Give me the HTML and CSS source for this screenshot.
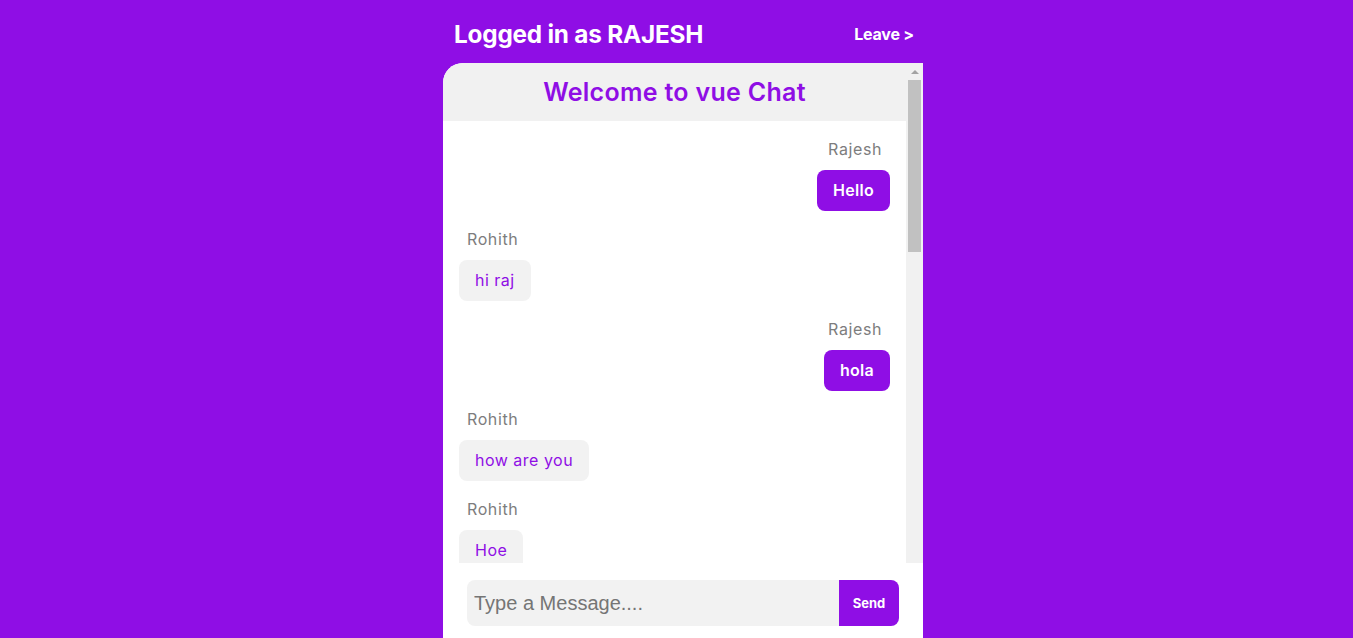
FILE: index.html
```html
<!DOCTYPE html>
<html lang="en">
<head>
<meta charset="utf-8">
<title>vue Chat</title>
<link rel="stylesheet" href="styles.css">
</head>
<body>
<div class="page">
  <div class="app">
    <header class="topbar">
      <h1 class="logged">Logged in as RAJESH</h1>
      <button class="leave">Leave &gt;</button>
    </header>
    <section class="chat">
      <div class="chat-body">
        <div class="chat-scroll">
          <h2 class="chat-title">Welcome to vue Chat</h2>
          <div class="messages">
            <div class="msg me"><div class="name">Rajesh</div><div class="bubble">Hello</div></div>
            <div class="msg"><div class="name">Rohith</div><div class="bubble">hi raj</div></div>
            <div class="msg me"><div class="name">Rajesh</div><div class="bubble">hola</div></div>
            <div class="msg"><div class="name">Rohith</div><div class="bubble">how are you</div></div>
            <div class="msg"><div class="name">Rohith</div><div class="bubble">Hoe</div></div>
            <div class="msg me"><div class="name">Rajesh</div><div class="bubble">I am fine</div></div>
            <div class="msg"><div class="name">Rohith</div><div class="bubble">good</div></div>
          </div>
        </div>
        <div class="scrollbar" aria-hidden="true">
          <div class="sb-up"><span class="sb-arrow"></span></div>
          <div class="sb-thumb"></div>
        </div>
      </div>
      <form class="composer">
        <input class="composer-input" type="text" placeholder="Type a Message....">
        <button class="send" type="button">Send</button>
      </form>
    </section>
  </div>
</div>
</body>
</html>
```

FILE: styles.css
```css
html, body {
  margin: 0;
  padding: 0;
}
body {
  background: #8f0ee5;
  font-family: "Inter", "Open Sans", sans-serif;
  height: 638px;
  overflow: hidden;
}
.page {
  padding-left: 13px;
}
.app {
  width: 480px;
  margin: 0 auto;
}
.topbar {
  height: 63px;
  display: flex;
  align-items: center;
  justify-content: space-between;
  padding: 5px 9px 0 11px;
  box-sizing: border-box;
  color: #fff;
}
.logged {
  margin: 0;
  font-size: 24.3px;
  font-weight: 700;
  letter-spacing: -0.2px;
  line-height: 1;
}
.leave {
  background: none;
  border: none;
  padding: 0;
  color: #fff;
  font-family: inherit;
  font-size: 16px;
  font-weight: 700;
  letter-spacing: -0.2px;
  cursor: pointer;
}
.chat {
  background: #fff;
  border-top-left-radius: 20px;
}
.chat-body {
  display: flex;
  height: 500px;
}
.chat-scroll {
  flex: 1;
  min-width: 0;
  overflow: hidden;
  border-top-left-radius: 20px;
}
.scrollbar {
  width: 17px;
  flex: none;
  background: #f1f1f1;
  display: flex;
  flex-direction: column;
}
.sb-up {
  height: 17px;
  display: flex;
  justify-content: center;
  padding-top: 7px;
  box-sizing: border-box;
}
.sb-arrow {
  width: 0;
  height: 0;
  border-left: 4px solid transparent;
  border-right: 4px solid transparent;
  border-bottom: 4px solid #a3a3a3;
}
.sb-thumb {
  height: 172px;
  margin: 0 2px;
  background: #c1c1c1;
}
.chat-title {
  margin: 0;
  height: 58px;
  background: #f1f1f1;
  color: #8f0ee5;
  display: flex;
  align-items: center;
  justify-content: center;
  font-size: 25px;
  font-weight: 600;
  letter-spacing: 0.3px;
}
.messages {
  padding: 16px;
  display: flex;
  flex-direction: column;
}
.msg {
  display: flex;
  flex-direction: column;
  align-items: flex-start;
  margin-bottom: 16px;
}
.msg.me {
  align-items: flex-end;
}
.name {
  color: #7d7d7d;
  font-size: 16px;
  line-height: 24px;
  padding: 0 8px;
  margin-bottom: 9px;
  letter-spacing: 0.6px;
}
.bubble {
  background: #f2f2f2;
  color: #8f0ee5;
  font-size: 16px;
  line-height: 25px;
  padding: 8px 16px;
  border-radius: 8px;
  letter-spacing: 0.5px;
}
.msg.me .bubble {
  background: #8f0ee5;
  color: #fff;
  font-weight: 600;
  letter-spacing: 0.3px;
}
.composer {
  display: flex;
  padding: 17px 24px 12px;
  margin: 0;
}
.composer-input {
  flex: 1;
  height: 46px;
  box-sizing: border-box;
  border: none;
  outline: none;
  background: #f2f2f2;
  border-radius: 8px 0 0 8px;
  padding: 0 7px;
  font-family: "Liberation Sans", Arial, sans-serif;
  font-size: 20px;
  color: #333;
}
.composer-input::placeholder {
  color: #757575;
}
.send {
  width: 60px;
  height: 46px;
  border: none;
  background: #8f0ee5;
  color: #fff;
  border-radius: 0 8px 8px 0;
  font-family: inherit;
  font-size: 13px;
  font-weight: 700;
  cursor: pointer;
}
```
